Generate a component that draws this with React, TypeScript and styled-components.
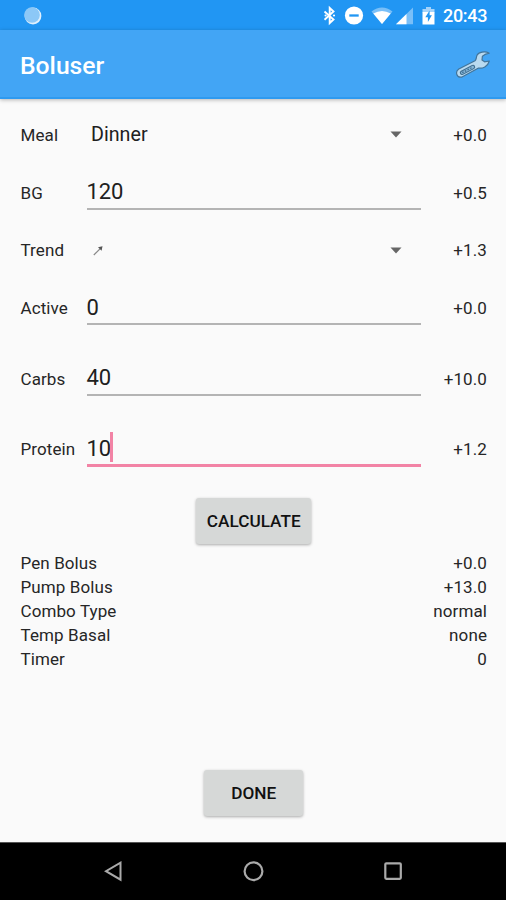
import React from 'react';
import styled, { createGlobalStyle } from 'styled-components';

const GlobalStyle = createGlobalStyle`
  * { box-sizing: border-box; }
  body { margin: 0; background: #fafafa; font-family: Roboto, "Liberation Sans", sans-serif; }
`;

const Screen = styled.div`
  width: 506px;
  height: 900px;
  display: flex;
  flex-direction: column;
  overflow: hidden;
  background: #fafafa;
  color: #262626;
`;

const StatusBar = styled.div`
  height: 30px;
  flex: none;
  display: flex;
  align-items: center;
  padding: 1px 18px 0 24px;
  background: #2196f3;
  color: #fff;
`;

const StatusIcons = styled.svg`
  display: block;
  margin-left: auto;
`;

const Clock = styled.span`
  width: 45px;
  margin-left: 4px;
  font-size: 18px;
  font-weight: 500;
  line-height: 28px;
  letter-spacing: -0.3px;
  white-space: nowrap;
`;

const AppBar = styled.header`
  height: 69px;
  flex: none;
  display: flex;
  align-items: center;
  justify-content: space-between;
  padding: 2px 16px 0 20px;
  background: #42a5f5;
  border-bottom: 2px solid #2e9af0;
  box-shadow: 0 1px 4px rgba(0, 0, 0, 0.28);
`;

const Title = styled.h1`
  margin: 2px 0 0;
  font-size: 24.7px;
  font-weight: 500;
  line-height: 32px;
  color: #fff;
`;

const Form = styled.main`
  flex: 1;
  display: flex;
  flex-direction: column;
  align-items: stretch;
  padding: 7px 19px 0 20.5px;
`;

const FormRow = styled.div<{ $tall?: boolean }>`
  flex: none;
  height: ${p => (p.$tall ? 70.7 : 57.8)}px;
  display: grid;
  grid-template-columns: 66px 334px 1fr;
  align-items: center;
`;

const FieldGroup = styled.div<{ $offset?: boolean }>`
  display: flex;
  flex-direction: column;
  margin-top: ${p => (p.$offset ? 6 : 0)}px;
`;

const Label = styled.span`
  font-size: 17px;
  line-height: 24px;
  letter-spacing: 0.1px;
  white-space: nowrap;
`;

const Amount = styled(Label)`
  letter-spacing: 0.1px;
  text-align: right;
`;

const Input = styled.div<{ $focused?: boolean }>`
  height: 34px;
  margin-top: ${p => (p.$focused ? 1 : 0)}px;
  display: flex;
  align-items: center;
  padding-top: 1.5px;
  border-bottom: ${p => (p.$focused ? '3px solid #f283a5' : '2px solid #b4b4b4')};
  font-size: 22px;
  line-height: 30px;
  letter-spacing: -0.15px;
  color: #202020;
`;

const Caret = styled.span`
  width: 3px;
  height: 30px;
  margin: -3px 0 0 -0.5px;
  background: #f283a5;
`;

const Spinner = styled.div`
  display: flex;
  align-items: center;
  justify-content: space-between;
  height: 34px;
  padding: 0 18.5px 0 4.5px;
  font-size: 19.7px;
  line-height: 30px;
  color: #202020;
`;

const Button = styled.button<{ $width: number }>`
  flex: none;
  align-self: center;
  width: ${p => p.$width}px;
  height: 46px;
  padding: 0;
  border: 0;
  border-radius: 3px;
  background: #d6d8d7;
  box-shadow: 0 1px 3px rgba(0, 0, 0, 0.32);
  font: 500 17.2px/24px Roboto, "Liberation Sans", sans-serif;
  color: #111;
`;

const CalculateButton = styled(Button)`
  margin-top: 13px;
`;

const DoneButton = styled(Button)`
  margin-top: 99px;
`;

const Results = styled.dl`
  flex: none;
  margin: 7px 0 0;
`;

const ResultRow = styled.div`
  display: flex;
  justify-content: space-between;
  height: 24px;
  font-size: 17px;
  line-height: 24px;
`;

const ResultName = styled.dt`
  letter-spacing: 0.1px;
`;

const ResultValue = styled.dd`
  margin: 0;
  letter-spacing: 0.1px;
`;

const NavBar = styled.nav`
  height: 58px;
  flex: none;
  display: flex;
  align-items: center;
  justify-content: space-between;
  padding: 0 103px;
  background: #000;
  border-top: 1px solid #555;
`;

const SpinnerArrow = () => (
  <svg width="12" height="7" viewBox="0 0 12 7">
    <path d="M.5.5h11L6 6.5z" fill="#666" />
  </svg>
);

const TrendArrow = () => (
  <svg width="14" height="14" viewBox="0 0 14 14">
    <path d="M2.8 12 9.5 5.3" stroke="#888" strokeWidth="1.2" fill="none" />
    <path d="M7 4.2 11.5 3.2 10.6 7.8z" fill="#555" />
  </svg>
);

const Wrench = () => (
  <svg width="36" height="32" viewBox="0 0 36 32">
    <path
      d="M35.2 4.2 C31 1.8 24.5 3 23 6.3 C22 8.8 22.6 10.5 21 11.8 L4.8 20 C0.8 22.8 2.5 29.2 8 28 L24.5 19 C28.5 19.8 33.8 17.6 35.3 12 L30.6 12.8 L28 11 L28.4 7.2 L31 5.4 Z"
      fill="#b9daf0"
      stroke="#42759b"
      strokeWidth="1.2"
      strokeLinejoin="round"
    />
    <path d="M8 23.8 19 18" stroke="#416f91" strokeWidth="4.4" strokeLinecap="round" />
    <path d="M8.2 23.7 18.8 18.1" stroke="#86b8da" strokeWidth="2.4" strokeLinecap="round" />
    <path d="M8.2 23.7 18.8 18.1" stroke="#416f91" strokeWidth="1.4" strokeDasharray="1.6 1.4" />
  </svg>
);

const StatusGlyphs = () => (
  <StatusIcons width="117" height="26" viewBox="322 3 117 26">
    <path d="M324.5 11.5 333.5 19.5 329.7 23V8L333.5 11.5 324.5 19.7" fill="none" stroke="#fff" strokeWidth="1.9" />
    <circle cx="325.6" cy="15.5" r="1.1" fill="#fff" />
    <circle cx="334" cy="15.5" r="1.1" fill="#fff" />
    <circle cx="354" cy="15.5" r="9.1" fill="#fff" />
    <path d="M349.3 15.5h9.4" stroke="#2196f3" strokeWidth="2.3" />
    <path d="M371.5 11.5Q382 3.5 392.5 11.5L382 24z" fill="#79bff8" />
    <path d="M373.3 13.6Q382 8.6 390.7 13.6L382 24z" fill="#fff" />
    <path d="M396 24.3 413 7.5v16.8z" fill="#79bff8" />
    <path d="M396 24.3 406.5 14v10.3z" fill="#fff" />
    <path d="M426 7h5v2h3.5v3.5h-12V9h3.5z" fill="#a5d3fa" />
    <path d="M422.5 12h12v12.5h-12z" fill="#fff" />
    <path d="M429.6 10.5 425.3 17.2h2.6V22l4-6.8h-2.3z" fill="#2196f3" />
  </StatusIcons>
);

const SyncDot = () => (
  <svg width="18" height="18" viewBox="0 0 18 18">
    <circle cx="9" cy="9" r="8.4" fill="#dff0fd" />
    <circle cx="8" cy="8" r="7.8" fill="#8cc8f7" />
  </svg>
);

const results = [
  ['Pen Bolus', '+0.0'],
  ['Pump Bolus', '+13.0'],
  ['Combo Type', 'normal'],
  ['Temp Basal', 'none'],
  ['Timer', '0'],
];

type FieldProps = { label: string; value: string; amount: string; tall?: boolean; focused?: boolean };

const InputField = ({ label, value, amount, tall, focused }: FieldProps) => (
  <FormRow $tall={tall}>
    <Label>{label}</Label>
    <Input $focused={focused}>
      {value}
      {focused && <Caret />}
    </Input>
    <Amount>{amount}</Amount>
  </FormRow>
);

const SpinnerField = ({ label, amount, children }: { label: string; amount: string; children: React.ReactNode }) => (
  <FormRow>
    <Label>{label}</Label>
    <Spinner>
      {children}
      <SpinnerArrow />
    </Spinner>
    <Amount>{amount}</Amount>
  </FormRow>
);

export default function App() {
  return (
    <>
      <GlobalStyle />
      <Screen>
        <StatusBar>
          <SyncDot />
          <StatusGlyphs />
          <Clock>20:43</Clock>
        </StatusBar>
        <AppBar>
          <Title>Boluser</Title>
          <Wrench />
        </AppBar>
        <Form>
          <FieldGroup>
            <SpinnerField label="Meal" amount="+0.0">Dinner</SpinnerField>
            <InputField label="BG" value="120" amount="+0.5" />
            <SpinnerField label="Trend" amount="+1.3">
              <TrendArrow />
            </SpinnerField>
            <InputField label="Active" value="0" amount="+0.0" />
          </FieldGroup>
          <FieldGroup $offset>
            <InputField label="Carbs" value="40" amount="+10.0" tall />
            <InputField label="Protein" value="10" amount="+1.2" tall focused />
          </FieldGroup>
          <CalculateButton $width={115}>CALCULATE</CalculateButton>
          <Results>
            {results.map(([name, value]) => (
              <ResultRow key={name}>
                <ResultName>{name}</ResultName>
                <ResultValue>{value}</ResultValue>
              </ResultRow>
            ))}
          </Results>
          <DoneButton $width={99}>DONE</DoneButton>
        </Form>
        <NavBar>
          <svg width="20" height="22" viewBox="0 0 20 22">
            <path d="M17.5 1.7v17L3 10.2z" fill="none" stroke="#aaa" strokeWidth="2" />
          </svg>
          <svg width="22" height="22" viewBox="0 0 22 22">
            <circle cx="11.5" cy="10.2" r="8.9" fill="none" stroke="#aaa" strokeWidth="2.2" />
          </svg>
          <svg width="20" height="20" viewBox="0 0 20 20">
            <rect x="2.3" y="1.3" width="15.5" height="15.5" rx="1" fill="none" stroke="#aaa" strokeWidth="2.2" />
          </svg>
        </NavBar>
      </Screen>
    </>
  );
}
